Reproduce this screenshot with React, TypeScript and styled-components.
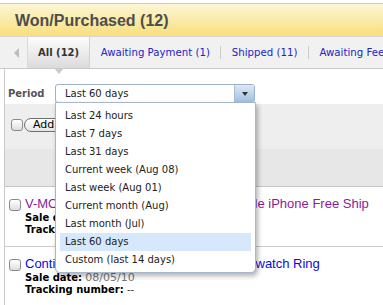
import React from 'react';
import styled, { createGlobalStyle } from 'styled-components';

const GlobalStyle = createGlobalStyle`
  html, body {
    margin: 0;
    padding: 0;
    background: #fff;
  }
  body {
    font-family: "DejaVu Sans", Verdana, sans-serif;
    font-size: 10px;
    color: #222;
  }
`;

const tabs = ['Awaiting Payment (1)', 'Shipped (11)', 'Awaiting Feedback (9)'];

const periods = [
  'Last 24 hours',
  'Last 7 days',
  'Last 31 days',
  'Current week (Aug 08)',
  'Last week (Aug 01)',
  'Current month (Aug)',
  'Last month (Jul)',
  'Last 60 days',
  'Custom (last 14 days)',
];

const items = [
  {
    title: 'V-MODA Vibe Duo Headphones for Apple iPhone Free Ship',
    visited: true,
    date: '08/06/10',
  },
  {
    title: 'Continental Digital LCD Sports Hot Stopwatch Ring',
    visited: false,
    date: '08/05/10',
  },
];

const Page = styled.div`
  width: 383px;
  height: 305px;
  overflow: hidden;
  padding-top: 3px;
  box-sizing: border-box;
`;

const Header = styled.div`
  height: 31px;
  display: flex;
  align-items: center;
  padding: 1px 0 0 15px;
  box-sizing: content-box;
  border-top: 1px solid #f1cf5c;
  border-bottom: 1px solid #d8d8d8;
  background: linear-gradient(#fcf6d6, #f8df7c);
`;

const Title = styled.h1`
  margin: 0;
  font: bold 16px "Liberation Sans", Arial, sans-serif;
  color: #4d4d4d;
`;

const TabBar = styled.div`
  height: 31px;
  display: flex;
  border-bottom: 1px solid #c9c9c9;
  background: #f1f1f1;
  white-space: nowrap;
`;

const ArrowCell = styled.div`
  flex-shrink: 0;
  width: 28px;
  padding-left: 14px;
  box-sizing: border-box;
  display: flex;
  align-items: center;
  border-right: 1px solid #dadada;

  &::before {
    content: '';
    border-top: 5.5px solid transparent;
    border-bottom: 5.5px solid transparent;
    border-right: 5px solid #bdbdbd;
  }
`;

const ActiveTab = styled.div`
  flex-shrink: 0;
  position: relative;
  display: flex;
  align-items: center;
  padding: 0 10px;
  border-right: 1px solid #d2d2d2;
  background: linear-gradient(#fdfdfd, #dbdbdb);
  font-weight: bold;
  color: #333;

  &::after {
    content: '';
    position: absolute;
    top: 100%;
    left: calc(50% - 5px);
    border-left: 5px solid transparent;
    border-right: 5px solid transparent;
    border-top: 6px solid #cacaca;
    z-index: 2;
  }
`;

const TabLink = styled.a`
  flex-shrink: 0;
  display: flex;
  align-items: center;
  padding: 0 10.5px;
  font-size: 10.2px;
  color: #2323c8;
  text-decoration: none;
`;

const TabSep = styled.span`
  flex-shrink: 0;
  align-self: center;
  width: 1px;
  height: 13px;
  background: #cdcdcd;
`;

const Content = styled.div`
  margin-left: 4px;
  border-left: 1px solid #c9c9c9;
`;

const FilterRow = styled.div`
  height: 35px;
  box-sizing: border-box;
  display: flex;
  align-items: flex-start;
  padding: 15px 0 0 3px;
`;

const Label = styled.span`
  width: 47px;
  line-height: 19px;
  font-weight: bold;
  color: #555;
`;

const Select = styled.div`
  position: relative;
  width: 200px;
  height: 19px;
  box-sizing: border-box;
  display: flex;
  border: 1px solid #9db0c8;
  border-radius: 3px;
  background: #fff;
`;

const SelectValue = styled.span`
  flex: 1;
  padding-left: 9px;
  line-height: 17px;
  color: #222;
`;

const SelectButton = styled.span`
  width: 20px;
  box-sizing: border-box;
  display: flex;
  align-items: center;
  justify-content: center;
  border-left: 1px solid #a9bcd2;
  border-radius: 0 2px 2px 0;
  background: linear-gradient(#dce9f6, #9ec0e2);

  &::before {
    content: '';
    border-left: 3.5px solid transparent;
    border-right: 3.5px solid transparent;
    border-top: 4px solid #333;
  }
`;

const Dropdown = styled.ul`
  position: absolute;
  top: 100%;
  left: -1px;
  width: 201px;
  box-sizing: border-box;
  margin: 0;
  padding: 4px 4px 3px;
  list-style: none;
  border: 1px solid #a6b6cb;
  border-radius: 0 0 5px 5px;
  background: #fff;
  box-shadow: 2px 3px 5px rgba(0, 0, 0, 0.3);
  z-index: 10;
`;

const Option = styled.li<{ $selected?: boolean }>`
  height: 18px;
  line-height: 18px;
  padding-left: 5px;
  color: #222;
  white-space: nowrap;
  background: ${({ $selected }) => ($selected ? '#d6e8fb' : 'transparent')};
`;

const Toolbar = styled.div`
  height: 45px;
  box-sizing: border-box;
  display: flex;
  align-items: flex-start;
  padding: 15px 0 0 6px;
  background: #eeeeee;
`;

const Checkbox = styled.input.attrs({ type: 'checkbox' })<{ $top?: number }>`
  appearance: none;
  flex-shrink: 0;
  width: 12px;
  height: 12px;
  margin: ${({ $top = 0 }) => $top}px 0 0;
  border: 1px solid #8a8a8a;
  border-radius: 3px;
  background: linear-gradient(#fff, #dedede);
`;

const PillButton = styled.button`
  height: 14px;
  margin: -1px 0 0 1px;
  padding: 0 8px;
  border: 1px solid #6e6e6e;
  border-radius: 8px;
  background: linear-gradient(#fff, #e6e6e6);
  font: 11px "DejaVu Sans", Verdana, sans-serif;
  line-height: 12px;
  color: #000;
  white-space: nowrap;
`;

const ColumnHeader = styled.div`
  height: 37px;
  background: #e7e7e7;
  border-bottom: 1px solid #c5c5c5;
`;

const Row = styled.div`
  display: flex;
  align-items: flex-start;
  gap: 4px;
  padding: 9px 0 10px 4px;
  border-bottom: 1px solid #cbcbcb;
`;

const ItemInfo = styled.div`
  white-space: nowrap;
`;

const ItemTitle = styled.a<{ $visited?: boolean }>`
  display: block;
  font: 13px "Liberation Sans", Arial, sans-serif;
  line-height: 15px;
  color: ${({ $visited }) => ($visited ? '#8a1a9b' : '#0b0bdc')};
  text-decoration: none;
`;

const Meta = styled.div<{ $first?: boolean }>`
  line-height: 12px;
  margin-top: ${({ $first }) => ($first ? '1px' : '0')};
  color: #000;
`;

const MetaLabel = styled.b`
  font-size: 10px;
`;

const MetaValue = styled.span<{ $muted?: boolean }>`
  font-size: ${({ $muted }) => ($muted ? '11px' : '10px')};
  color: ${({ $muted }) => ($muted ? '#777' : '#333')};
`;

export default function App() {
  return (
    <Page>
      <GlobalStyle />
      <Header>
        <Title>Won/Purchased (12)</Title>
      </Header>
      <TabBar>
        <ArrowCell />
        <ActiveTab>All (12)</ActiveTab>
        {tabs.map((t, i) => (
          <React.Fragment key={t}>
            {i > 0 && <TabSep />}
            <TabLink>{t}</TabLink>
          </React.Fragment>
        ))}
      </TabBar>
      <Content>
        <FilterRow>
          <Label>Period</Label>
          <Select>
            <SelectValue>Last 60 days</SelectValue>
            <SelectButton />
            <Dropdown>
              {periods.map((p) => (
                <Option key={p} $selected={p === 'Last 60 days'}>
                  {p}
                </Option>
              ))}
            </Dropdown>
          </Select>
        </FilterRow>
        <Toolbar>
          <Checkbox />
          <PillButton>Add to list</PillButton>
        </Toolbar>
        <ColumnHeader />
        {items.map((item) => (
          <Row key={item.title}>
            <Checkbox $top={3} />
            <ItemInfo>
              <ItemTitle $visited={item.visited}>{item.title}</ItemTitle>
              <Meta $first>
                <MetaLabel>Sale date:</MetaLabel> <MetaValue $muted>{item.date}</MetaValue>
              </Meta>
              <Meta>
                <MetaLabel>Tracking number:</MetaLabel> <MetaValue>--</MetaValue>
              </Meta>
            </ItemInfo>
          </Row>
        ))}
      </Content>
    </Page>
  );
}
